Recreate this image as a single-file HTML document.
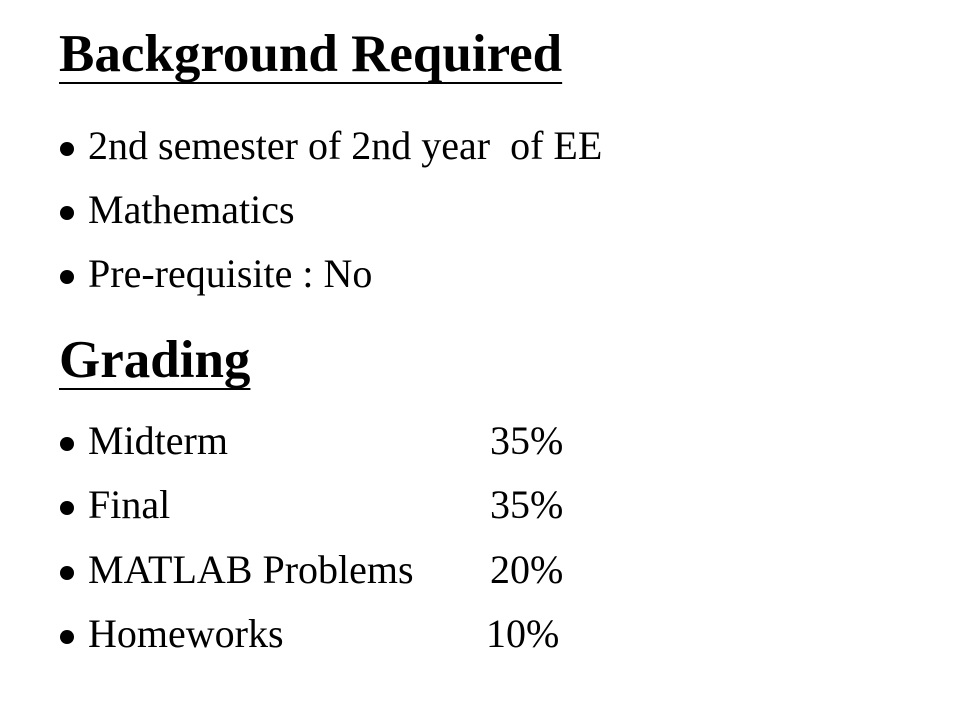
<!DOCTYPE html>
<html><head><style>
body{margin:0;width:960px;height:720px;background:#fff;position:relative;overflow:hidden;font-family:"Liberation Serif",serif;color:#000}
.h{position:absolute;left:59px;font-size:53px;line-height:53px;font-weight:bold;text-decoration:underline;text-decoration-thickness:2px;text-underline-offset:11px;text-decoration-skip-ink:none;white-space:nowrap}
.t{position:absolute;left:88px;font-size:40px;line-height:40px;white-space:nowrap}
.p{position:absolute;font-size:40px;line-height:40px;white-space:nowrap}
.b{position:absolute;left:60px;width:14px;height:14px;border-radius:50%;background:#000}
</style></head><body>
<div class="h" style="top:28px">Background Required</div>
<div class="b" style="top:142px"></div><div class="t" style="top:126px">2nd semester of 2nd year&nbsp; of EE</div>
<div class="b" style="top:206px"></div><div class="t" style="top:190px">Mathematics</div>
<div class="b" style="top:270px"></div><div class="t" style="top:254px">Pre-requisite : No</div>
<div class="h" style="top:334px">Grading</div>
<div class="b" style="top:437px"></div><div class="t" style="top:421px">Midterm</div><div class="p" style="left:490px;top:421px">35%</div>
<div class="b" style="top:501px"></div><div class="t" style="top:485px">Final</div><div class="p" style="left:490px;top:485px">35%</div>
<div class="b" style="top:566px"></div><div class="t" style="top:550px">MATLAB Problems</div><div class="p" style="left:490px;top:550px">20%</div>
<div class="b" style="top:630px"></div><div class="t" style="top:614px">Homeworks</div><div class="p" style="left:486px;top:614px">10%</div>
</body></html>
